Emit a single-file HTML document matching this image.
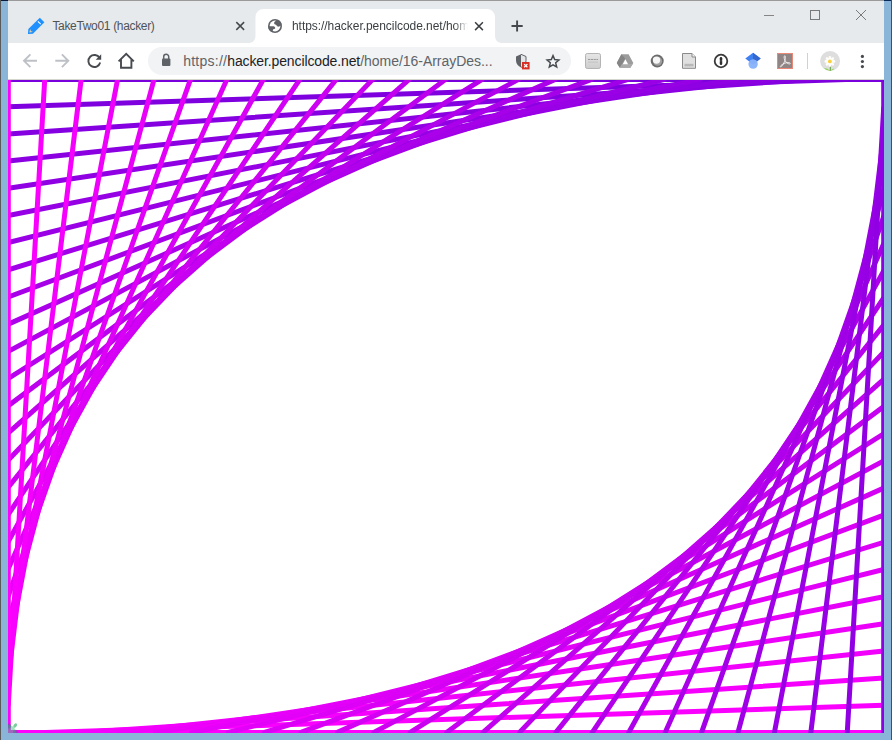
<!DOCTYPE html>
<html><head><meta charset="utf-8"><title>TakeTwo01</title>
<style>
*{box-sizing:border-box;margin:0;padding:0}
html,body{width:892px;height:740px;overflow:hidden;background:#8ab4d8;font-family:"Liberation Sans",sans-serif;}
#frame{position:absolute;left:0;top:0;width:892px;height:740px;background:#8ab4d8;}
#edgeL{position:absolute;left:0;top:0;width:1px;height:740px;background:#5a5a5a}
#edgeR{position:absolute;left:891px;top:0;width:1px;height:740px;background:#4a4f55}
#edgeT{position:absolute;left:0;top:0;width:892px;height:1px;background:#9a9a9a}
#edgeTL{position:absolute;left:0;top:0;width:8px;height:1px;background:#0a1a3a}
#edgeTR{position:absolute;left:884px;top:0;width:8px;height:1px;background:#0a2a5a}
#tabstrip{position:absolute;left:8px;top:1px;width:876px;height:42px;background:#e7eaed}
#toolbar{position:absolute;left:8px;top:43px;width:876px;height:37px;background:#fff;border-bottom:1px solid #d3d6cb}
#content{position:absolute;left:8px;top:80px;width:876px;height:653px;background:#fff;overflow:hidden}
#art{position:absolute;left:-8px;top:-80px}
.tabtxt{position:absolute;top:17px;font-size:12px;line-height:16px;color:#4f5358;white-space:nowrap;overflow:hidden}
#omni{position:absolute;left:140px;top:4px;width:423px;height:28px;border-radius:14px;background:#f1f3f4}
#url{position:absolute;left:175.200px;top:9px;font-size:14px;line-height:18px;color:#202124;white-space:nowrap;letter-spacing:0px}
#url span{color:#5f6368}
#chrome{position:absolute;left:0;top:0;overflow:visible}
</style></head><body>
<div id="frame">
<div id="tabstrip">
  <svg width="876" height="42" style="position:absolute;left:0;top:0"><path d="M240 42 C245 42 247.500 39.500 247.500 34 V16 a8 8 0 0 1 8 -8 H479 a8 8 0 0 1 8 8 V34 C487 39.500 489.500 42 495 42 Z" fill="#fff"/></svg>
  <div class="tabtxt" id="t1" style="left:44.400px;width:170px;letter-spacing:-0.330px">TakeTwo01 (hacker)</div>
  <div class="tabtxt" id="t2" style="left:284px;width:177px;letter-spacing:-0.050px;color:#3c4043;-webkit-mask-image:linear-gradient(to right,#000 162px,transparent 176px);mask-image:linear-gradient(to right,#000 162px,transparent 176px)">https://hacker.pencilcode.net/hom</div>
</div>
<div id="toolbar">
  <div id="omni"></div>
  <div id="url"><span style="letter-spacing:0.250px">https://</span><b style="font-weight:normal;letter-spacing:-0.120px">hacker.pencilcode.net</b><span style="letter-spacing:-0.030px">/home/16-ArrayDes...</span></div>
</div>
<div id="content">
<svg id="art" width="892" height="740" viewBox="0 0 892 740" stroke-width="5" stroke-linecap="round">
<line x1="9.62" y1="732.4" x2="883.7" y2="732.40" stroke="rgb(255,0,255)"/>
<line x1="46.04" y1="732.4" x2="883.7" y2="705.25" stroke="rgb(250,0,254)"/>
<line x1="82.46" y1="732.4" x2="883.7" y2="678.10" stroke="rgb(245,0,252)"/>
<line x1="118.88" y1="732.4" x2="883.7" y2="650.95" stroke="rgb(241,0,251)"/>
<line x1="155.30" y1="732.4" x2="883.7" y2="623.80" stroke="rgb(236,0,250)"/>
<line x1="191.72" y1="732.4" x2="883.7" y2="596.65" stroke="rgb(231,0,249)"/>
<line x1="228.14" y1="732.4" x2="883.7" y2="569.50" stroke="rgb(226,0,248)"/>
<line x1="264.56" y1="732.4" x2="883.7" y2="542.35" stroke="rgb(221,0,246)"/>
<line x1="300.98" y1="732.4" x2="883.7" y2="515.20" stroke="rgb(217,0,245)"/>
<line x1="337.40" y1="732.4" x2="883.7" y2="488.05" stroke="rgb(212,0,244)"/>
<line x1="373.82" y1="732.4" x2="883.7" y2="460.90" stroke="rgb(207,0,242)"/>
<line x1="410.24" y1="732.4" x2="883.7" y2="433.75" stroke="rgb(202,0,241)"/>
<line x1="446.66" y1="732.4" x2="883.7" y2="406.60" stroke="rgb(198,0,240)"/>
<line x1="483.08" y1="732.4" x2="883.7" y2="379.45" stroke="rgb(193,0,239)"/>
<line x1="519.50" y1="732.4" x2="883.7" y2="352.30" stroke="rgb(188,0,238)"/>
<line x1="555.92" y1="732.4" x2="883.7" y2="325.15" stroke="rgb(183,0,236)"/>
<line x1="592.34" y1="732.4" x2="883.7" y2="298.00" stroke="rgb(178,0,235)"/>
<line x1="628.76" y1="732.4" x2="883.7" y2="270.85" stroke="rgb(174,0,234)"/>
<line x1="665.18" y1="732.4" x2="883.7" y2="243.70" stroke="rgb(169,0,232)"/>
<line x1="701.60" y1="732.4" x2="883.7" y2="216.55" stroke="rgb(164,0,231)"/>
<line x1="738.02" y1="732.4" x2="883.7" y2="189.40" stroke="rgb(159,0,230)"/>
<line x1="774.44" y1="732.4" x2="883.7" y2="162.25" stroke="rgb(154,0,229)"/>
<line x1="810.86" y1="732.4" x2="883.7" y2="135.10" stroke="rgb(150,0,228)"/>
<line x1="847.28" y1="732.4" x2="883.7" y2="107.95" stroke="rgb(145,0,226)"/>
<line x1="883.70" y1="732.4" x2="883.7" y2="80.80" stroke="rgb(140,0,225)"/>
<line x1="882.38" y1="79.6" x2="8.3" y2="79.60" stroke="rgb(121,0,221)"/>
<line x1="845.96" y1="79.6" x2="8.3" y2="106.77" stroke="rgb(127,0,222)"/>
<line x1="809.54" y1="79.6" x2="8.3" y2="133.94" stroke="rgb(132,0,224)"/>
<line x1="773.12" y1="79.6" x2="8.3" y2="161.11" stroke="rgb(138,0,225)"/>
<line x1="736.70" y1="79.6" x2="8.3" y2="188.28" stroke="rgb(143,0,227)"/>
<line x1="700.28" y1="79.6" x2="8.3" y2="215.45" stroke="rgb(149,0,228)"/>
<line x1="663.86" y1="79.6" x2="8.3" y2="242.62" stroke="rgb(154,0,230)"/>
<line x1="627.44" y1="79.6" x2="8.3" y2="269.79" stroke="rgb(160,0,231)"/>
<line x1="591.02" y1="79.6" x2="8.3" y2="296.96" stroke="rgb(166,0,232)"/>
<line x1="554.60" y1="79.6" x2="8.3" y2="324.13" stroke="rgb(171,0,234)"/>
<line x1="518.18" y1="79.6" x2="8.3" y2="351.30" stroke="rgb(177,0,235)"/>
<line x1="481.76" y1="79.6" x2="8.3" y2="378.47" stroke="rgb(182,0,237)"/>
<line x1="445.34" y1="79.6" x2="8.3" y2="405.64" stroke="rgb(188,0,238)"/>
<line x1="408.92" y1="79.6" x2="8.3" y2="432.81" stroke="rgb(194,0,239)"/>
<line x1="372.50" y1="79.6" x2="8.3" y2="459.98" stroke="rgb(199,0,241)"/>
<line x1="336.08" y1="79.6" x2="8.3" y2="487.15" stroke="rgb(205,0,242)"/>
<line x1="299.66" y1="79.6" x2="8.3" y2="514.32" stroke="rgb(210,0,244)"/>
<line x1="263.24" y1="79.6" x2="8.3" y2="541.49" stroke="rgb(216,0,245)"/>
<line x1="226.82" y1="79.6" x2="8.3" y2="568.66" stroke="rgb(222,0,246)"/>
<line x1="190.40" y1="79.6" x2="8.3" y2="595.83" stroke="rgb(227,0,248)"/>
<line x1="153.98" y1="79.6" x2="8.3" y2="623.00" stroke="rgb(233,0,249)"/>
<line x1="117.56" y1="79.6" x2="8.3" y2="650.17" stroke="rgb(238,0,251)"/>
<line x1="81.14" y1="79.6" x2="8.3" y2="677.34" stroke="rgb(244,0,252)"/>
<line x1="44.72" y1="79.6" x2="8.3" y2="704.51" stroke="rgb(249,0,254)"/>
<line x1="8.30" y1="79.6" x2="8.3" y2="731.68" stroke="rgb(255,0,255)"/>
<g>
<circle cx="8.500" cy="732.500" r="7.400" fill="rgba(70,200,130,0.520)"/>
<ellipse cx="15.500" cy="731.800" rx="2.600" ry="1.800" fill="rgba(60,120,130,0.500)"/>
<ellipse cx="9.300" cy="726" rx="1.800" ry="2.600" fill="rgba(60,120,130,0.500)"/>
<ellipse cx="15.200" cy="725.500" rx="2.400" ry="1.500" transform="rotate(-50 15.200 725.500)" fill="rgba(50,180,100,0.650)"/>
</g>
</svg>
</div>
<svg id="chrome" width="892" height="80" viewBox="0 0 892 80">
<!-- pencil favicon -->
<g transform="translate(36 26) rotate(45)">
  <path d="M-3.200 -8.600 H3.200 V7.600 L0 11.400 L-3.200 7.600 Z" fill="#1e90ff"/>
  <rect x="-2" y="-5.200" width="4" height="1.100" fill="#fff"/>
  <path d="M-1.700 6 L0 7.400 L1.700 6 L1.200 7.800 L0 9.300 L-1.200 7.800Z" fill="#f2cf9c"/>
</g>
<!-- tab1 close -->
<path d="M236.300 22.100 L244.100 29.900 M244.100 22.100 L236.300 29.900" stroke="#45494d" stroke-width="1.500" fill="none"/>
<!-- globe -->
<clipPath id="gl"><circle cx="275" cy="26" r="6.900"/></clipPath>
<circle cx="275" cy="26" r="7" fill="#5f6368"/>
<circle cx="275" cy="26" r="5.400" fill="#fff"/>
<g clip-path="url(#gl)" fill="#5f6368">
<path d="M276.400 20.300 C275.400 21.200 274.100 22 274.100 23 C274.100 24.200 275 24.600 276 24.700 C276.600 25.400 276.900 26.200 277.800 26.600 C278.900 27 280 26.500 280.600 25.600 L282.500 24.500 L281 20 Z"/>
<path d="M268 26.300 H273.700 C274.600 26.600 275.300 27.400 275.200 28.200 C275 29 273.800 29.100 273.100 29.300 C272.800 30 272.800 30.800 272.700 31.600 L270 32 L267.500 29 Z"/>
</g>
<!-- tab2 close -->
<path d="M475.100 22.300 L482.900 30.100 M482.900 22.300 L475.100 30.100" stroke="#3c4043" stroke-width="1.500" fill="none"/>
<!-- new tab plus -->
<path d="M511.500 26 H522.700 M517.100 20.400 V31.600" stroke="#45494d" stroke-width="1.900" fill="none"/>
<!-- window controls -->
<path d="M764 15.500 H774" stroke="#858585" stroke-width="1"/>
<rect x="810.500" y="10.500" width="9" height="9" fill="none" stroke="#7a7a7a" stroke-width="1"/>
<path d="M856 10 L866 20 M866 10 L856 20" stroke="#7a7a7a" stroke-width="1" fill="none"/>
<!-- back / forward -->
<path d="M37 60.800 H24.500 M30.400 54.400 L24 60.800 L30.400 67.200" stroke="#bdc1c6" stroke-width="1.900" fill="none"/>
<path d="M55.300 60.800 H67.800 M61.900 54.400 L68.300 60.800 L61.900 67.200" stroke="#bdc1c6" stroke-width="1.900" fill="none"/>
<!-- reload -->
<path d="M99.600 58 A6 6 0 1 0 100.200 62.500" stroke="#474b50" stroke-width="1.900" fill="none"/>
<path d="M101.200 54.300 V59.800 H95.700 Z" fill="#474b50"/>
<!-- home -->
<path d="M118.600 61.400 L126.200 53.800 L133.800 61.400 M121 59.500 V67.800 H131.400 V59.500" stroke="#474b50" stroke-width="1.900" fill="none" stroke-linejoin="miter"/>
<!-- lock -->
<rect x="162" y="58.500" width="8.400" height="7.500" rx="1" fill="#5f6368"/>
<path d="M163.700 59 V56.800 a2.500 2.500 0 0 1 5 0 V59" stroke="#5f6368" stroke-width="1.500" fill="none"/>
<!-- shield -->
<path d="M521 54.300 L516 56.500 V60.500 C516 63.800 518.200 66.400 521 67.400 Z" fill="#5f6368"/>
<path d="M521 54.300 L526 56.500 V60.500 C526 63.800 523.800 66.400 521 67.400" fill="#e4e6e8" stroke="#5f6368" stroke-width="1"/>
<rect x="522" y="62" width="7.600" height="7.400" fill="#d93025"/>
<path d="M524.200 64.100 L527.400 67.300 M527.400 64.100 L524.200 67.300" stroke="#fff" stroke-width="1.300"/>
<!-- star -->
<path d="M553 55.600 L554.700 59.600 L558.900 60 L555.700 62.800 L556.700 67 L553 64.800 L549.300 67 L550.300 62.800 L547.100 60 L551.300 59.600 Z" fill="none" stroke="#474b50" stroke-width="1.500" stroke-linejoin="miter"/>
<!-- ext1 -->
<linearGradient id="g1" x1="0" y1="0" x2="0" y2="1"><stop offset="0" stop-color="#e6e6e6"/><stop offset="1" stop-color="#cdcdcd"/></linearGradient>
<rect x="585.500" y="53.500" width="15" height="15" rx="1.800" fill="url(#g1)" stroke="#b4b4b4"/>
<path d="M588 59.500 H598" stroke="#9a9a9a" stroke-width="1" stroke-dasharray="2.200 0.600"/>
<rect x="588" y="61.700" width="10" height="0.800" fill="#bdbdbd"/>
<!-- drive gray -->
<path d="M621.400 54.200 H628.600 L633.300 63.100 L630.400 67.800 H619.800 L616.800 63.100 Z" fill="#9c9c9c"/>
<path d="M621.400 54.200 L616.800 63.100 L619.800 67.800 L625.200 58.600 Z" fill="#858585"/>
<path d="M619.800 67.800 L622 64.100 H632.700 L630.400 67.800Z" fill="#a9a9a9"/>
<path d="M622.700 64.300 L625.400 59.300 L628.100 64.300 Z" fill="#fff"/>
<!-- ring -->
<circle cx="657.200" cy="61" r="6.500" fill="#6c6c6c"/>
<circle cx="657.600" cy="61.300" r="4.500" fill="#a0a0a0"/>
<circle cx="656.500" cy="60.100" r="3.700" fill="#f6f6f6"/>
<!-- doc -->
<path d="M682.500 53.500 H692 L695.500 57 V68.300 H682.500 Z" fill="#e0e0e0" stroke="#8a8a8a" stroke-width="1"/>
<path d="M692 53.500 V57 H695.500" fill="#f4f4f4" stroke="#8a8a8a" stroke-width="1"/>
<rect x="684.500" y="63.800" width="9" height="2.600" fill="#b8b8b8"/>
<!-- 1password -->
<circle cx="721" cy="61" r="6.300" fill="#fff" stroke="#3a3a3a" stroke-width="1.800"/>
<path d="M721 58.200 V63.800" stroke="#2e2e2e" stroke-width="2.500" stroke-linecap="round"/>
<path d="M719.400 60.900 H720.200 M721.800 60.900 H722.600" stroke="#fff" stroke-width="0.900"/>
<!-- scholar -->
<path d="M745.300 58.600 L753 52.800 L760.700 58.600 L753 64.400 Z" fill="#4081f2"/>
<path d="M753 52.800 L760.700 58.600 L753 64.400 Z" fill="#3568cf"/>
<circle cx="753.100" cy="64.100" r="4.700" fill="#8db5fa"/>
<path d="M748.900 62 A4.700 4.700 0 0 1 757.300 62 L753 64.400Z" fill="#85aff8"/>
<!-- pdf -->
<rect x="777.500" y="53.500" width="15" height="15" fill="#8f8585" stroke="#ea8878" stroke-width="1"/>
<path d="M784.600 55.800 C783.400 56.600 784.400 60 786 62 C787.600 64 790.400 64.400 790.300 63.400 C790.200 62.400 786.500 62.300 783.800 63.600 C781.300 64.800 779.900 66.400 780.400 66.800 C781.200 67.400 783.700 64.200 784.900 60.300 C785.600 57.900 785.600 55.300 784.600 55.800Z" fill="none" stroke="#f0ecec" stroke-width="1"/>
<!-- sep -->
<rect x="807" y="53" width="1" height="16" fill="#cfd1d4"/>
<!-- avatar -->
<clipPath id="av"><circle cx="830.100" cy="61" r="10"/></clipPath>
<circle cx="830.100" cy="61" r="10" fill="#dedede"/>
<g clip-path="url(#av)">
  <path d="M824 67.900 C826.500 68 828.500 69.200 830.200 70.600 C831.500 69.400 832.800 68.600 834.200 68.400 C833.600 70 832 70.900 830.200 70.900 C827.500 71 825 70 824 67.900Z" fill="#9ad566"/>
  <path d="M830.300 65.500 V70.800" stroke="#5f9e3f" stroke-width="1"/>
  <circle cx="829.9" cy="61.4" r="5.400" fill="#ece6d2" opacity="0.550"/>
  <g fill="#fff"><ellipse cx="829.90" cy="58.20" rx="1.350" ry="2.300" transform="rotate(0 829.90 58.20)"/><ellipse cx="832.16" cy="59.14" rx="1.350" ry="2.300" transform="rotate(45 832.16 59.14)"/><ellipse cx="833.10" cy="61.40" rx="1.350" ry="2.300" transform="rotate(90 833.10 61.40)"/><ellipse cx="832.16" cy="63.66" rx="1.350" ry="2.300" transform="rotate(135 832.16 63.66)"/><ellipse cx="829.90" cy="64.60" rx="1.350" ry="2.300" transform="rotate(180 829.90 64.60)"/><ellipse cx="827.64" cy="63.66" rx="1.350" ry="2.300" transform="rotate(225 827.64 63.66)"/><ellipse cx="826.70" cy="61.40" rx="1.350" ry="2.300" transform="rotate(270 826.70 61.40)"/><ellipse cx="827.64" cy="59.14" rx="1.350" ry="2.300" transform="rotate(315 827.64 59.14)"/></g>
  <circle cx="829.9" cy="61.4" r="1.900" fill="#f8cf3e"/>
</g>
<!-- menu -->
<circle cx="862.400" cy="56.400" r="1.600" fill="#474b50"/><circle cx="862.400" cy="61.500" r="1.600" fill="#474b50"/><circle cx="862.400" cy="66.600" r="1.600" fill="#474b50"/>

</svg>
<div id="edgeT"></div><div id="edgeTL"></div><div id="edgeTR"></div>
<div id="edgeL"></div><div id="edgeR"></div>
</div>
</body></html>
